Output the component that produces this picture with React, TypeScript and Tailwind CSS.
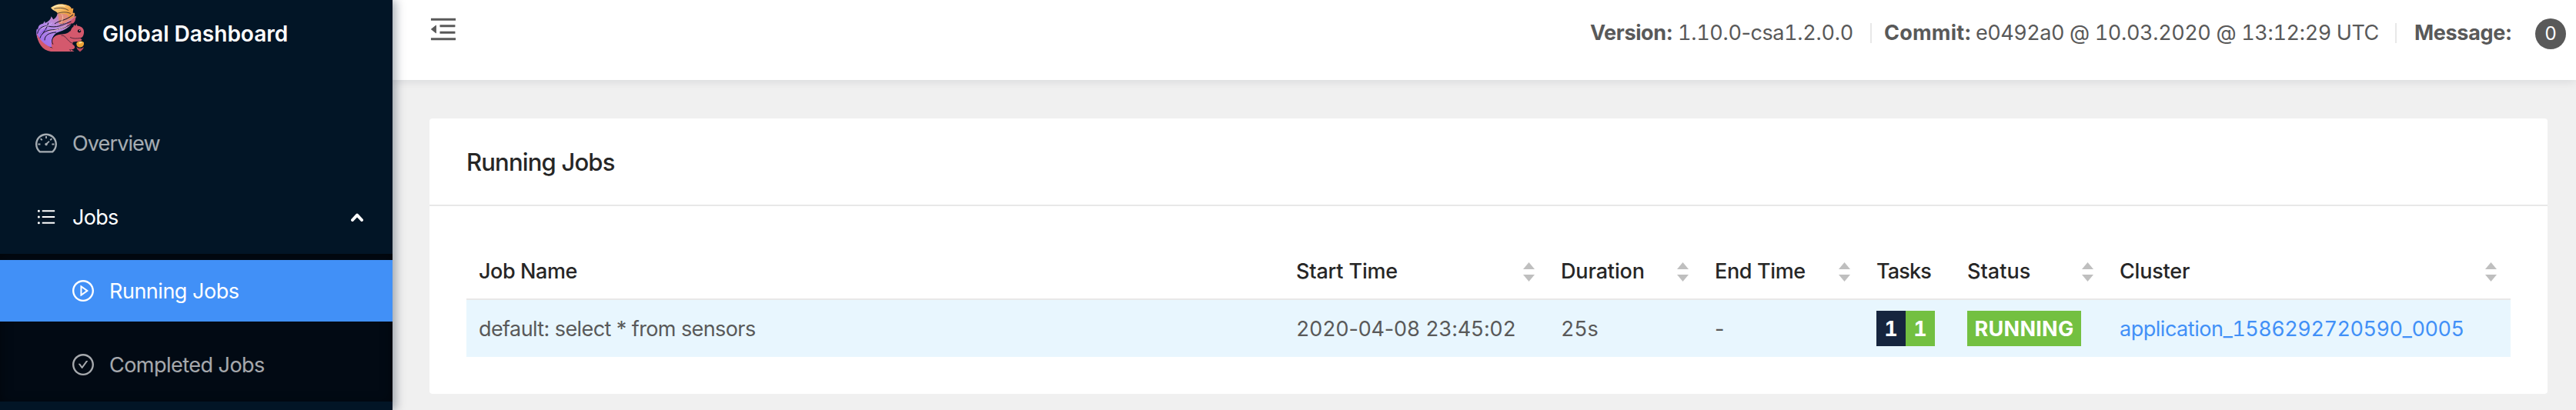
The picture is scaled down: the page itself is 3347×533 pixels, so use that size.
import React from "react";
import {
  AiOutlineMenuFold,
  AiOutlineDashboard,
  AiOutlineBars,
  AiOutlinePlayCircle,
  AiOutlineCheckCircle,
} from "react-icons/ai";

const TIGHT = "64 64 896 896";

function Squirrel() {
  return (
    <svg className="h-20 w-[100px] shrink-0" viewBox="0 0 300 240">
      <defs>
        <linearGradient id="tip" x1="0" y1="0" x2="1" y2="1">
          <stop offset="0" stopColor="#fbe3a0" />
          <stop offset="0.55" stopColor="#f0a545" />
          <stop offset="1" stopColor="#d97a55" />
        </linearGradient>
        <linearGradient id="tail" x1="0" y1="1" x2="1" y2="0">
          <stop offset="0" stopColor="#9a66ee" />
          <stop offset="0.5" stopColor="#b58be6" />
          <stop offset="1" stopColor="#dc7d8c" />
        </linearGradient>
      </defs>
      <path d="M108 30C124 18 142 13 160 17C178 19 190 28 188 34L196 32L194 50L201 50C204 66 196 76 186 86L130 96L106 90C124 76 138 66 134 52C130 42 118 44 108 30Z" fill="url(#tip)" />
      <path d="M134 52C152 56 168 50 176 62L186 84L128 98L106 88C124 78 138 66 134 52Z" fill="#e08a78" />
      <path d="M110 64L118 76C128 70 132 62 134 54C146 78 130 98 150 94C170 92 182 70 207 62C204 76 198 88 188 94C176 112 150 122 130 128C112 140 110 162 116 184L74 180C52 152 48 128 54 112L58 116C58 102 64 94 78 92L84 82L86 90C100 84 108 76 110 64Z" fill="url(#tail)" />
      <path d="M53 130C55 166 76 198 108 201H186L180 193C198 196 206 186 199 178C192 170 184 172 188 166C202 160 214 164 226 158C232 156 230 150 218 149C232 148 238 138 237 122C236 108 224 101 212 101L208 93L204 101L198 96L196 104C186 110 186 122 180 132C164 136 142 132 126 142C110 152 108 172 116 188C86 178 64 156 53 130Z" fill="#d4596d" />
      <path d="M112 186C108 164 112 148 130 138C150 130 170 138 184 120L196 150L190 190L150 198Z" fill="#d4596d" />
      <path d="M200 200L186 193L184 201Z" fill="#d4596d" />
      <path d="M168 92C180 88 190 76 206 64C202 78 206 82 196 90C188 96 178 98 168 92Z" fill="#cf5871" />
      <g fill="none" stroke="#141226" strokeLinecap="round" strokeWidth="3">
        <path d="M56 130C60 106 86 96 108 104C140 108 164 92 186 84" />
        <path d="M66 148C74 122 98 116 124 116C148 114 176 102 190 92" />
        <path d="M84 156C84 136 102 128 128 126" />
        <path d="M76 132C86 116 96 104 98 90" />
        <path d="M116 172C108 158 114 142 134 130" />
        <path d="M124 92C144 78 164 82 194 58" />
        <path d="M134 52C148 48 164 44 184 52" strokeWidth="2" />
        <path d="M122 34C144 28 164 32 176 40" strokeWidth="2" />
        <path d="M150 138C168 138 170 158 190 168" strokeWidth="2" />
        <path d="M184 146C196 152 208 150 220 149" strokeWidth="2" />
      </g>
      <g fill="none" strokeLinecap="round" strokeWidth="3">
        <path d="M72 112C88 100 96 106 112 90" stroke="#d6b6f4" />
        <path d="M100 122C124 120 150 112 168 102" stroke="#e9b7bd" />
        <path d="M66 134C72 126 82 116 92 114" stroke="#7d4fe0" />
        <path d="M148 88C156 74 158 62 150 56" stroke="#f3c3a8" />
        <path d="M120 26C134 20 150 20 162 24" stroke="#fff3cf" />
      </g>
      <circle cx="219" cy="121" r="6.5" fill="#1a1020" />
      <circle cx="221" cy="119" r="1.8" fill="#fff" />
      <path d="M209 182C216 190 230 190 236 182C236 192 228 196 222 202C216 196 208 192 209 182Z" fill="#b9485b" />
      <path d="M208 168C212 158 232 158 237 166C238 176 234 184 222 185C210 184 208 176 208 168Z" fill="#efa336" />
      <path d="M218 164C222 160 230 162 232 166L218 172Z" fill="#fbdc8c" />
      <path d="M204 176C210 190 232 190 238 180" fill="none" stroke="#141226" strokeWidth="2" />
    </svg>
  );
}

/* Digits share one width; the punctuation between them keeps its own. */
function Digits({ children }: { children: string }) {
  return (
    <>
      {children.split(/(\d+)/).map((part, i) =>
        /\d/.test(part) ? (
          <span key={i} className="tabular-nums">
            {part}
          </span>
        ) : (
          part
        ),
      )}
    </>
  );
}

function Sorter() {
  return (
    <svg className="h-[25px] w-[15px] shrink-0" viewBox="0 0 15 25" fill="#bfbfbf">
      <path d="M7.5 0L15 9H0Z" />
      <path d="M7.5 25L15 16H0Z" />
    </svg>
  );
}

function Th({ label, spacing, sort = true }: { label: string; spacing: string; sort?: boolean }) {
  return (
    <div className="flex h-[74px] items-center justify-between border-b-2 border-[#e8e8e8] pt-0.5 pr-[18px] pl-4 font-medium text-[#262626]">
      <span className={spacing}>{label}</span>
      {sort && <Sorter />}
    </div>
  );
}

function Td({ children }: { children: React.ReactNode }) {
  return <div className="flex h-[74px] items-center bg-[#e8f6fe] pl-4">{children}</div>;
}

const COLS = "grid grid-cols-[1062px_344px_200px_210px_118px_198px_524px]";

export default function App() {
  return (
    <div className="flex h-[533px] w-[3347px] overflow-hidden bg-[#f0f0f0] font-[Inter,sans-serif] text-[27px] leading-[42px] whitespace-nowrap text-[#595959]">
      <aside className="relative z-10 flex w-[510px] shrink-0 flex-col bg-[#021526] text-white/65 shadow-[4px_0_12px_rgba(0,21,41,0.35)]">
        <div className="flex h-[146px] items-start pl-[30px]">
          <Squirrel />
          <h1 className="pt-[23px] pl-[3px] text-[28px] font-semibold text-white">Global Dashboard</h1>
        </div>
        <div className="flex h-20 items-center gap-5 pl-[46px]">
          <AiOutlineDashboard viewBox={TIGHT} size={28} />
          <span className="pt-0.5 tracking-[-0.87px]">Overview</span>
        </div>
        <div className="mt-4 flex h-20 items-center gap-5 pr-[38px] pl-[46px] text-white">
          <AiOutlineBars size={28} />
          <span className="flex-1 pt-0.5 tracking-[-0.71px]">Jobs</span>
          <svg className="h-3 w-4" viewBox="0 0 16 12" fill="none" stroke="#fff" strokeWidth="4">
            <path d="M2 10L8 3.6L14 10" strokeLinejoin="round" strokeLinecap="round" />
          </svg>
        </div>
        <div className="mt-2 h-[192px] bg-[#020a14] pt-2 shadow-[inset_0_4px_16px_rgba(0,0,0,0.45)]">
          <div className="flex h-20 items-center gap-5 bg-[#4190f7] pl-[94px] text-white">
            <AiOutlinePlayCircle viewBox={TIGHT} size={28} />
            <span className="pt-0.5 tracking-[-0.48px]">Running Jobs</span>
          </div>
          <div className="mt-4 flex h-20 items-center gap-5 pl-[94px]">
            <AiOutlineCheckCircle viewBox={TIGHT} size={28} />
            <span className="pt-0.5 tracking-[-0.53px]">Completed Jobs</span>
          </div>
        </div>
      </aside>

      <div className="flex min-w-0 flex-1 flex-col">
        <header className="flex h-[104px] shrink-0 items-start justify-between bg-white pr-[13px] pl-12 shadow-[0_2px_12px_rgba(0,21,41,0.1)]">
          <AiOutlineMenuFold viewBox={TIGHT} size={36} className="mt-5" />
          <div className="flex h-[86px] items-center">
            <strong className="w-[114px] font-bold tracking-[-0.39px]">Version:</strong>
            <span className="w-[250px] shrink-0 tracking-[-0.5px]">
              <Digits>1.10.0-csa1.2.0.0</Digits>
            </span>
            <i className="h-[26px] w-0.5 bg-[#e8e8e8]" />
            <strong className="ml-4 w-[119px] font-bold tracking-[0.21px]">Commit:</strong>
            <span className="w-[545px] shrink-0 tracking-[-0.5px]">
              <Digits>e0492a0 @ 10.03.2020 @ 13:12:29 UTC</Digits>
            </span>
            <i className="h-[26px] w-0.5 bg-[#e8e8e8]" />
            <strong className="ml-[23px] w-[157px] font-bold tracking-[-0.33px]">Message:</strong>
            <span className="mt-0.5 flex h-10 w-10 items-center justify-center rounded-full bg-[#595959] text-2xl text-white">0</span>
          </div>
        </header>

        <main className="mt-[50px] ml-12 h-[358px] w-[2752px] rounded-[4px] bg-white">
          <h2 className="flex h-[114px] items-center border-b-2 border-[#e8e8e8] pt-0.5 pl-12 text-[31px] font-medium tracking-[-0.82px] text-[#262626]">
            Running Jobs
          </h2>
          <div className="px-12 pt-12">
            <div className={COLS}>
              <Th label="Job Name" spacing="tracking-[-0.41px]" sort={false} />
              <Th label="Start Time" spacing="tracking-[-0.16px]" />
              <Th label="Duration" spacing="tracking-[-0.13px]" />
              <Th label="End Time" spacing="tracking-[-0.36px]" />
              <Th label="Tasks" spacing="tracking-[-0.83px]" sort={false} />
              <Th label="Status" spacing="tracking-[0.03px]" />
              <Th label="Cluster" spacing="tracking-[-0.21px]" />
            </div>
            <div className={COLS}>
              <Td>
                <span className="pt-0.5 tracking-[-0.59px]">default: select * from sensors</span>
              </Td>
              <Td>
                <span className="pt-0.5 tracking-[-0.4px]">
                  <Digits>2020-04-08 23:45:02</Digits>
                </span>
              </Td>
              <Td>
                <span className="pt-0.5 tracking-[-0.3px] tabular-nums">25s</span>
              </Td>
              <Td>
                <span className="pt-0.5">-</span>
              </Td>
              <Td>
                <b className="flex h-[46px] w-[38px] items-center justify-center bg-[#16253e] pt-0.5 text-white tabular-nums">1</b>
                <b className="flex h-[46px] w-[38px] items-center justify-center bg-[#73c041] pt-0.5 text-white tabular-nums">1</b>
              </Td>
              <Td>
                <b className="flex h-[46px] w-[148px] items-center justify-center bg-[#73c041] pt-0.5 tracking-[0.28px] text-white">RUNNING</b>
              </Td>
              <Td>
                <a className="pt-0.5 tracking-[-0.48px] text-[#4190f7] tabular-nums">application_1586292720590_0005</a>
              </Td>
            </div>
          </div>
        </main>
      </div>
    </div>
  );
}
